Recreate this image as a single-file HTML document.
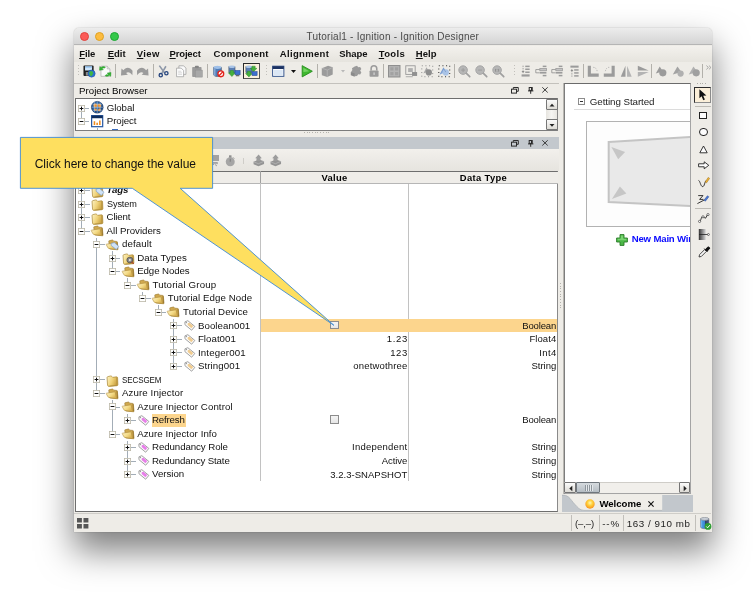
<!DOCTYPE html>
<html><head><meta charset="utf-8"><title>Ignition Designer</title>
<style>
html,body{margin:0;padding:0;background:#fff;}
body{width:753px;height:603px;position:relative;overflow:hidden;font-family:"Liberation Sans",sans-serif;font-size:10px;color:#000;}
div,span,svg{position:absolute;box-sizing:border-box;}
svg{overflow:visible;}
#win{will-change:transform;left:74px;top:27px;width:638px;height:505px;}
#wbg{left:0;top:0.6px;width:638px;height:504.6px;background:#eeece7;border-radius:5px 5px 0 0;box-shadow:0 18px 34px 1px rgba(0,0,0,0.5),0 0 1.5px rgba(0,0,0,0.3);}
#title{left:0;top:0.6px;width:638px;height:17.9px;border-radius:5px 5px 0 0;background:linear-gradient(#ececec,#d4d4d4);border-bottom:0.5px solid #b5b5b5;}
#title .t{left:232.6px;top:3.8px;color:#4b4b4b;white-space:nowrap;}
.tl{top:4.6px;width:9.3px;height:9.3px;border-radius:50%;}
#menu{left:0;top:18.5px;width:638px;height:16.5px;background:linear-gradient(#f3f1ed,#e6e4de);}
#menu span{top:2.5px;font-weight:bold;color:#111;white-space:nowrap;}
#menu u{text-decoration-thickness:0.7px;text-underline-offset:1px;}
.sep{width:1px;background:#b3b1ab;height:14px;}
.grip{width:1px;height:12px;background:repeating-linear-gradient(#c2c0bb 0 1px,transparent 1px 3px);}
.ph{background:#eeece7;height:15px;font-size:9.6px;white-space:nowrap;}
.lbl{white-space:nowrap;font-size:9.7px;line-height:13.5px;height:13.5px;color:#111;letter-spacing:0.25px;}
.val{white-space:nowrap;font-size:9.4px;line-height:13.5px;height:13.5px;text-align:right;color:#111;letter-spacing:0.3px;}
.hl{background:#fcd58d;}
.exp{width:6.6px;height:6.6px;border:0.8px solid #8a8a8a;background:#fff;}
.exp i{position:absolute;left:1px;right:1px;top:2.1px;height:0.9px;background:#222;}
.exp b{position:absolute;top:1px;bottom:1px;left:2.1px;width:0.9px;background:#222;}
.hline{height:0.9px;background:#a3adb7;}
.vline{width:0.9px;background:#a3adb7;}
</style></head><body>
<div id="win"><div id="wbg"></div>
<div id="title">
<div class="tl" style="left:5.9px;background:#fc5b57;border:0.5px solid #e0443e;"></div>
<div class="tl" style="left:20.8px;background:#fdbc40;border:0.5px solid #dea123;"></div>
<div class="tl" style="left:36.0px;background:#34c84a;border:0.5px solid #1ea733;"></div>
<div class="t" style="font-size:10px;letter-spacing:0.221px;">Tutorial1 - Ignition - Ignition Designer</div></div>
<div id="menu">
<span style="left:5.2px;font-size:9.5px;letter-spacing:-0.088px;"><u>F</u>ile</span>
<span style="left:33.7px;font-size:9.5px;letter-spacing:0.019px;"><u>E</u>dit</span>
<span style="left:62.8px;font-size:9.5px;letter-spacing:0.341px;"><u>V</u>iew</span>
<span style="left:95.5px;font-size:9.5px;letter-spacing:-0.151px;"><u>P</u>roject</span>
<span style="left:139.6px;font-size:9.5px;letter-spacing:0.266px;">Component</span>
<span style="left:205.8px;font-size:9.5px;letter-spacing:0.320px;">Alignment</span>
<span style="left:265.3px;font-size:9.5px;letter-spacing:-0.052px;">Shape</span>
<span style="left:304.7px;font-size:9.5px;letter-spacing:0.343px;"><u>T</u>ools</span>
<span style="left:341.8px;font-size:9.5px;letter-spacing:0.071px;"><u>H</u>elp</span>
</div>
<!-- toolbar -->
<div class="grip" style="left:3.50px;top:37.50px;"></div>
<svg style="left:8.50px;top:37.50px;" width="12.5" height="12.5" viewBox="0 0 16 16"><rect x="0.600" y="0.600" width="13" height="13.400" rx="1.200" fill="#1f1f1f"/><rect x="2.600" y="1.800" width="9" height="5.200" fill="#cfe6fb"/><rect x="2.600" y="1.800" width="9" height="1.600" fill="#8fc0ee"/><rect x="3.600" y="9" width="5" height="4.600" fill="#8a8a8a"/><circle cx="11" cy="11" r="4.600" fill="#2a72d0" stroke="#1a4a94" stroke-width="0.600"/><path d="M8 9.500q1.500-2.500 3.500-1.500t1.500 2.500-1.500 3-2.500-.5-1-3.500z" fill="#3fb544"/></svg>
<svg style="left:24.70px;top:37.50px;" width="12.5" height="12.5" viewBox="0 0 16 16"><path d="M2.500 1.500h8l3.500 3.500v9.500H2.500z" fill="#fbfbfb" stroke="#a9a9a9" stroke-width="0.900"/><path d="M10.500 1.500V5H14" fill="#e3e3e3" stroke="#a9a9a9" stroke-width="0.700"/><path d="M0.600 6.800L1 1.800l1.600 1.400C4.400 1.600 6.600 1.500 8.200 2.800L6.800 4.200C6 3.600 5 3.700 4.100 4.600L5.600 6.100z" fill="#35b535" stroke="#1e8a1e" stroke-width="0.500"/><path d="M15.400 9.600L15 14.600l-1.600-1.400c-1.800 1.600-4 1.700-5.600.4l1.400-1.400c.8.600 1.800.5 2.700-.4L10.400 10.300z" fill="#35b535" stroke="#1e8a1e" stroke-width="0.500"/></svg>
<div class="sep" style="left:41.40px;top:36.50px;"></div>
<svg style="left:45.50px;top:37.50px;" width="13.5" height="12.5" viewBox="0 0 16 16"><path d="M0.6 13.4L1.2 4.6L3.8 6.8C6.4 2.4 12 2 15.400 7.400L15.200 13.200C12.600 9.400 9.600 8.600 7.200 10.200L9.400 12.400Z" fill="#9b9b9b"/></svg>
<svg style="left:62.10px;top:37.50px;" width="13.5" height="12.5" viewBox="0 0 16 16"><path d="M0.6 13.4L1.2 4.6L3.8 6.8C6.4 2.4 12 2 15.400 7.400L15.200 13.200C12.600 9.400 9.600 8.600 7.200 10.200L9.400 12.400Z" transform="translate(16,0) scale(-1,1)" fill="#9b9b9b"/></svg>
<div class="sep" style="left:78.90px;top:36.50px;"></div>
<svg style="left:83.00px;top:37.50px;" width="12.5" height="12.5" viewBox="0 0 16 16"><path d="M3 0.8L9.600 10M11.400 1.600L6.200 10.500" stroke="#8d97a8" stroke-width="2" fill="none"/><circle cx="4.800" cy="13" r="2.100" fill="none" stroke="#27467e" stroke-width="1.700"/><circle cx="12" cy="10.600" r="2.100" fill="none" stroke="#27467e" stroke-width="1.700"/></svg>
<svg style="left:100.50px;top:37.50px;" width="12.5" height="12.5" viewBox="0 0 16 16"><path d="M5 1h6l3 3v8H5z" fill="#fafafa" stroke="#9a9a9a" stroke-width="0.9"/><path d="M2 4h6l3 3v8H2z" fill="#fdfdfd" stroke="#9a9a9a" stroke-width="0.9"/><path d="M4 8h4M4 10h5M4 12h5" stroke="#c5c5c5" stroke-width="0.8"/></svg>
<svg style="left:117.00px;top:37.50px;" width="12.5" height="12.5" viewBox="0 0 16 16"><rect x="1.5" y="2.5" width="12" height="13" rx="1" fill="#9b9b9b"/><rect x="5" y="1" width="5" height="3" rx="1" fill="#858585"/><rect x="5.5" y="6.5" width="9" height="9" fill="#a8a8a8" stroke="#8e8e8e" stroke-width="0.6"/></svg>
<div class="sep" style="left:133.40px;top:36.50px;"></div>
<svg style="left:138.20px;top:37.50px;" width="12.5" height="12.5" viewBox="0 0 16 16"><path d="M2 3v9c0 1.6 2.3 2.6 5 2.6s5-1 5-2.6V3z" fill="#4f7db9" stroke="#3c4450" stroke-width="0.7"/><ellipse cx="7" cy="3" rx="5" ry="2" fill="#9fc0e8"/><path d="M2 3v9c0 1 1 2 2.5 2.3V4.6C3 4.3 2 3.7 2 3z" fill="#86a8d6"/><circle cx="11.300" cy="11.300" r="3.700" fill="#fff" stroke="#e3231b" stroke-width="1.700"/><path d="M8.900 13.700l4.800-4.800" stroke="#e3231b" stroke-width="1.600"/></svg>
<svg style="left:153.80px;top:37.50px;" width="12.5" height="12.5" viewBox="0 0 16 16"><path d="M1 2v7c0 1.2 1.8 2 4 2s4-.8 4-2V2z" fill="#5c7fb5" stroke="#3c4450" stroke-width="0.6"/><ellipse cx="5" cy="2.2" rx="4" ry="1.6" fill="#a9c4e6"/><path d="M3 7h4v3h2.5L5 14.8.5 10H3z" fill="#44b03c" stroke="#2b8a26" stroke-width="0.6"/><rect x="9" y="7" width="6.5" height="5.5" fill="#3d6fd0" stroke="#23488f" stroke-width="0.7"/><rect x="10" y="13" width="4.5" height="1.4" fill="#555"/></svg>
<div style="left:169.00px;top:36.00px;width:17px;height:16.4px;background:#fbf1de;border:1px solid #2b2b2b;border-right-color:#555;border-bottom-color:#555;"></div>
<svg style="left:170.50px;top:37.50px;" width="12.5" height="12.5" viewBox="0 0 16 16"><path d="M1 2v7c0 1.2 1.8 2 4 2s4-.8 4-2V2z" fill="#5c7fb5" stroke="#3c4450" stroke-width="0.6"/><ellipse cx="5" cy="2.2" rx="4" ry="1.6" fill="#a9c4e6"/><path d="M9 1.5h4v2.8h2.3L11 8.5 6.7 4.3H9z" fill="#44b03c" stroke="#2b8a26" stroke-width="0.6"/><path d="M3 8h4v3h2.3L5 15.2.7 11H3z" fill="#44b03c" stroke="#2b8a26" stroke-width="0.6"/><rect x="9" y="8.5" width="6.5" height="5" fill="#3d6fd0" stroke="#23488f" stroke-width="0.7"/></svg>
<div class="grip" style="left:192.30px;top:37.50px;"></div>
<svg style="left:197.80px;top:37.50px;" width="12.5" height="12.5" viewBox="0 0 16 16"><rect x="0.8" y="1.5" width="14.4" height="13" fill="#fdfdfd" stroke="#2d4f8a" stroke-width="1.2"/><rect x="0.8" y="1.5" width="14.4" height="3.6" fill="#1b3263"/><rect x="2.3" y="6.3" width="11.4" height="7" fill="#dbe7f5"/></svg>
<svg style="left:217.30px;top:42.70px;" width="5" height="3" viewBox="0 0 5 3"><path d="M0 0h5L2.5 3z" fill="#111"/></svg>
<svg style="left:227.00px;top:37.50px;" width="12.5" height="12.5" viewBox="0 0 16 16"><path d="M1.5 0.8L14.5 8 1.5 15.2z" fill="#3fb82f" stroke="#228a18" stroke-width="1.1" stroke-linejoin="round"/><path d="M3 3.5L10.5 8 3 9z" fill="#8ee07c" opacity="0.7"/></svg>
<div class="sep" style="left:243.40px;top:36.50px;"></div>
<svg style="left:246.80px;top:37.50px;" width="12.5" height="12.5" viewBox="0 0 16 16"><path d="M1 4l8-3 6 2v9l-7 3.5L1 13z" fill="#9b9b9b"/><path d="M1 4l7 2.5V15.5M8 6.5L15 3" stroke="#b9b9b9" stroke-width="0.9" fill="none"/></svg>
<svg style="left:267.30px;top:43.00px;" width="4" height="2.6" viewBox="0 0 5 3"><path d="M0 0h5L2.5 3z" fill="#b8b8b8"/></svg>
<svg style="left:275.90px;top:37.50px;" width="12.5" height="12.5" viewBox="0 0 16 16"><path d="M6 2l3-1 1.5 2 2.5-.5L14.5 5 13 7l1.5 2.5-1.5 2.5-2.5-.3L9 14l-3 .3L4.5 12 2 11.5 1.5 8.5 3 6.5 2.5 4z" fill="#9b9b9b"/><path d="M1 9l5 2v4l-5-2z" fill="#8a8a8a"/></svg>
<svg style="left:294.00px;top:37.50px;" width="12.5" height="12.5" viewBox="0 0 16 16"><path d="M4 7V4.5a3.6 3.6 0 0 1 7.2 0V7" fill="none" stroke="#9b9b9b" stroke-width="2"/><rect x="2" y="7" width="11.5" height="8" rx="1" fill="#9b9b9b"/><rect x="6.8" y="9.5" width="2" height="3.2" fill="#c9c9c9"/></svg>
<div class="sep" style="left:308.70px;top:36.50px;"></div>
<svg style="left:313.50px;top:37.50px;" width="12.5" height="12.5" viewBox="0 0 16 16"><rect x="0.7" y="0.7" width="14.6" height="14.6" fill="#b5b5b5" stroke="#8f8f8f" stroke-width="1.4"/><path d="M3 3h4v4H3zM9 3h4v4H9zM3 9h4v4H3zM9 9h4v4H9z" fill="#a2a2a2"/></svg>
<svg style="left:331.00px;top:37.50px;" width="12.5" height="12.5" viewBox="0 0 16 16"><rect x="1" y="1" width="12" height="11" fill="none" stroke="#959595" stroke-width="1.100"/><rect x="4" y="4" width="6" height="5" fill="#b0b0b0"/><rect x="9" y="9" width="6.5" height="5" fill="#909090"/><path d="M1 15h9" stroke="#9a9a9a" stroke-width="1"/></svg>
<svg style="left:347.00px;top:37.50px;" width="12.5" height="12.5" viewBox="0 0 16 16"><rect x="1" y="1" width="14" height="14" fill="none" stroke="#8a8a8a" stroke-width="1.200" stroke-dasharray="1.300 3.370"/><path d="M3 11L7 3l3 5z" fill="#a9a9a9"/><circle cx="10" cy="9.5" r="4" fill="#8e8e8e"/></svg>
<svg style="left:363.50px;top:37.50px;" width="12.5" height="12.5" viewBox="0 0 16 16"><rect x="1" y="1" width="14" height="14" fill="none" stroke="#333" stroke-width="1.300" stroke-dasharray="1.300 3.370"/><path d="M2 12L7 3l4 6z" fill="#8fb2e2"/><circle cx="10" cy="9.500" r="4" fill="#a9c3e6"/><path d="M3 12L7 4.500l3 4.500" stroke="#6a88b8" stroke-width="0.700" fill="none"/></svg>
<div class="sep" style="left:379.90px;top:36.50px;"></div>
<svg style="left:384.10px;top:37.50px;" width="12.5" height="12.5" viewBox="0 0 16 16"><circle cx="6.5" cy="6.5" r="5.5" fill="#b6b6b6" stroke="#a3a3a3" stroke-width="1.2"/><path d="M10.800 10.800l4.200 4.200" stroke="#a0a0a0" stroke-width="2.200" stroke-linecap="round"/><path d="M4 6.5h5M6.5 4v5" stroke="#9c9c9c" stroke-width="1.2"/></svg>
<svg style="left:400.80px;top:37.50px;" width="12.5" height="12.5" viewBox="0 0 16 16"><circle cx="6.5" cy="6.5" r="5.5" fill="#b6b6b6" stroke="#a3a3a3" stroke-width="1.2"/><path d="M10.800 10.800l4.200 4.200" stroke="#a0a0a0" stroke-width="2.200" stroke-linecap="round"/><path d="M4 6.5h5" stroke="#9c9c9c" stroke-width="1.2"/></svg>
<svg style="left:417.50px;top:37.50px;" width="12.5" height="12.5" viewBox="0 0 16 16"><circle cx="6.5" cy="6.5" r="5.5" fill="#b6b6b6" stroke="#a3a3a3" stroke-width="1.2"/><path d="M10.800 10.800l4.200 4.200" stroke="#a0a0a0" stroke-width="2.200" stroke-linecap="round"/><path d="M4.5 5v3.5M8.5 5v3.5M6.5 5.5v.8M6.5 7.5v.8" stroke="#8a8a8a" stroke-width="1.1"/></svg>
<div class="grip" style="left:439.50px;top:37.50px;"></div>
<svg style="left:444.50px;top:37.50px;" width="12.5" height="12.5" viewBox="0 0 16 16"><rect x="8" y="0.800" width="5.600" height="1.900" fill="#9b9b9b"/><rect x="8" y="4.500" width="5.600" height="1.900" fill="#9b9b9b"/><rect x="8" y="8.300" width="5.600" height="1.900" fill="#9b9b9b"/><rect x="3.300" y="12" width="10.300" height="2.800" fill="#9b9b9b"/><path d="M5.200 0.800V8" stroke="#8c8c8c" stroke-width="1" stroke-dasharray="1.800 1.200"/><path d="M3.300 7.800h3.800L5.200 10.600z" fill="#8c8c8c"/></svg>
<svg style="left:460.50px;top:37.50px;" width="12.5" height="12.5" viewBox="0 0 16 16"><rect x="9.900" y="0.800" width="4.700" height="1.900" fill="#9b9b9b"/><rect x="6.200" y="4.400" width="8.400" height="2.900" fill="#c4c4c4" stroke="#9b9b9b" stroke-width="1"/><rect x="6.200" y="8.800" width="8.400" height="2.200" fill="#9b9b9b"/><rect x="9.900" y="12.600" width="4.700" height="1.900" fill="#9b9b9b"/><path d="M6 5.800H1V10H6" stroke="#8c8c8c" stroke-width="1" fill="none"/></svg>
<svg style="left:477.20px;top:37.50px;" width="12.5" height="12.5" viewBox="0 0 16 16"><rect x="9.900" y="0.800" width="4.700" height="1.900" fill="#9b9b9b"/><rect x="6.200" y="4.400" width="8.400" height="2.900" fill="#c4c4c4" stroke="#9b9b9b" stroke-width="1"/><rect x="6.200" y="8.800" width="8.400" height="2.200" fill="#9b9b9b"/><rect x="9.900" y="12.600" width="4.700" height="1.900" fill="#9b9b9b"/><path d="M6 5.800H1V10H6" stroke="#8c8c8c" stroke-width="1" fill="none"/></svg>
<svg style="left:495.00px;top:37.50px;" width="12.5" height="12.5" viewBox="0 0 16 16"><rect x="1.800" y="0.800" width="10.500" height="2.600" fill="#9b9b9b"/><rect x="6.600" y="5.400" width="5.700" height="1.900" fill="#9b9b9b"/><rect x="6.600" y="9.200" width="5.700" height="1.900" fill="#9b9b9b"/><rect x="6.600" y="13" width="5.700" height="1.900" fill="#9b9b9b"/><path d="M3.700 7.400V15" stroke="#8c8c8c" stroke-width="1" stroke-dasharray="1.800 1.200"/><path d="M1.800 7.800h3.800L3.700 5z" fill="#8c8c8c"/></svg>
<div class="sep" style="left:509.20px;top:36.50px;"></div>
<svg style="left:512.70px;top:37.50px;" width="12.5" height="12.5" viewBox="0 0 16 16"><path d="M1 1h4v10h10v4H1z" fill="#9b9b9b"/><path d="M8 3q4 0 5 5" stroke="#a5a5a5" stroke-width="1" fill="none" stroke-dasharray="1.5 1.5"/></svg>
<svg style="left:529.30px;top:37.50px;" width="12.5" height="12.5" viewBox="0 0 16 16"><path d="M15 1h-4v10H1v4h14z" fill="#9b9b9b"/><path d="M8 3q-4 0-5 5" stroke="#a5a5a5" stroke-width="1" fill="none" stroke-dasharray="1.5 1.5"/></svg>
<svg style="left:546.30px;top:37.50px;" width="12.5" height="12.5" viewBox="0 0 16 16"><path d="M7 1v14H1z" fill="#9b9b9b"/><path d="M9 1v14h6z" fill="#b3b3b3"/></svg>
<svg style="left:563.00px;top:37.50px;" width="12.5" height="12.5" viewBox="0 0 16 16"><path d="M1 1v6h14z" fill="#9b9b9b"/><path d="M1 9v6l14-6z" fill="#b3b3b3"/></svg>
<div class="sep" style="left:577.40px;top:36.50px;"></div>
<svg style="left:581.00px;top:37.50px;" width="12.5" height="12.5" viewBox="0 0 16 16"><path d="M1 11L6 2l4 6z" fill="#9b9b9b"/><circle cx="10" cy="10" r="4.6" fill="#9b9b9b"/></svg>
<svg style="left:597.70px;top:37.50px;" width="12.5" height="12.5" viewBox="0 0 16 16"><path d="M1 12L7 2l5 7z" fill="#a3a3a3"/><circle cx="11" cy="11" r="4" fill="#b0b0b0"/></svg>
<svg style="left:614.30px;top:37.50px;" width="12.5" height="12.5" viewBox="0 0 16 16"><path d="M1 12L7 2l5 7z" fill="#b0b0b0"/><circle cx="10.5" cy="10" r="4.6" fill="#a0a0a0"/></svg>
<div class="sep" style="left:628.20px;top:36.50px;"></div>
<svg style="left:631.50px;top:37.60px;" width="5.5" height="5" viewBox="0 0 6 5"><path d="M0.4 0.4L2.6 2.5 0.4 4.6M3.2 0.4L5.4 2.5 3.2 4.6" stroke="#8d8d8d" stroke-width="0.8" fill="none"/></svg>
<!-- project browser -->
<div style="left:0.00px;top:56.00px;width:485px;height:1px;background:#c3c1bc;"></div>
<svg width="0" height="0" style="left:0;top:0"><defs><linearGradient id="fg" x1="0" x2="1" y1="0" y2="0.4"><stop offset="0" stop-color="#fdf4c8"/><stop offset="0.55" stop-color="#f0d37a"/><stop offset="1" stop-color="#caa243"/></linearGradient><linearGradient id="fg2" x1="0" x2="1" y1="0" y2="0.6"><stop offset="0" stop-color="#fff6cf"/><stop offset="0.6" stop-color="#f3d983"/><stop offset="1" stop-color="#d7b052"/></linearGradient></defs></svg>
<div class="ph" style="left:0.00px;top:57.00px;width:485px;height:13.5px;"><span style="left:5.1px;top:0.7px;font-size:9.7px;letter-spacing:0.003px;">Project Browser</span></div>
<svg style="left:437.00px;top:60.10px;" width="7.8" height="6.6" viewBox="0 0 7.8 6.6"><path d="M2.3 1.9V0.5H7.3V4.3H5.6" fill="none" stroke="#2a2a2a" stroke-width="1"/><rect x="0.5" y="2.2" width="5" height="3.9" fill="none" stroke="#2a2a2a" stroke-width="1"/></svg>
<svg style="left:454.20px;top:60.10px;" width="5.4" height="6.8" viewBox="0 0 5.4 6.8"><rect x="1.2" y="0.5" width="3" height="2.9" fill="none" stroke="#2a2a2a" stroke-width="1"/><path d="M3.6 0.5v3" stroke="#2a2a2a" stroke-width="1.2"/><path d="M0 3.9h5.4M2.7 3.9V6.8" stroke="#2a2a2a" stroke-width="1"/></svg>
<svg style="left:468.20px;top:60.20px;" width="6" height="5.8" viewBox="0 0 6 5.8"><path d="M0.3 0.3l5.4 5.2M5.7 0.3L0.3 5.5" stroke="#2a2a2a" stroke-width="0.9"/></svg>
<div style="left:0.50px;top:70.70px;width:483.8px;height:33.2px;background:#fff;border:1px solid #6e6e6e;border-right-color:#8a8a8a;border-bottom-color:#7c7c7c;"></div>
<div style="left:472.30px;top:71.70px;width:11.2px;height:31.2px;background:linear-gradient(90deg,#e6e4df,#f6f5f2 50%,#e9e7e2);"></div>
<div style="left:472.30px;top:72.30px;width:11.3px;height:10.6px;background:linear-gradient(#fafafa,#dedcd6);border:0.8px solid #777;border-radius:1px;"><svg style="left:1.2px;top:2px" width="8" height="6" viewBox="0 0 8 6"><path d="M1.5 4.5h5L4 1.8z" fill="#222"/></svg></div>
<div style="left:472.30px;top:92.30px;width:11.3px;height:10.6px;background:linear-gradient(#fafafa,#dedcd6);border:0.8px solid #777;border-radius:1px;"><svg style="left:1.2px;top:2px" width="8" height="6" viewBox="0 0 8 6"><path d="M1.5 2h5L4 4.7z" fill="#222"/></svg></div>
<svg style="left:4.00px;top:77.50px;" width="7" height="7" viewBox="0 0 7 7"><rect x="0.4" y="0.4" width="6.2" height="6.2" fill="#fff" stroke="#bcb8a8" stroke-width="0.8"/><path d="M1.6 3.5h3.8M3.5 1.6v3.8" stroke="#111" stroke-width="1"/></svg>
<svg style="left:4.00px;top:91.10px;" width="7" height="7" viewBox="0 0 7 7"><rect x="0.4" y="0.4" width="6.2" height="6.2" fill="#fff" stroke="#bcb8a8" stroke-width="0.8"/><path d="M1.6 3.5h3.8" stroke="#111" stroke-width="1"/></svg>
<div class="hline" style="left:11.30px;top:80.50px;width:4px;"></div><div class="hline" style="left:11.30px;top:94.10px;width:4px;"></div>
<div class="vline" style="left:7.30px;top:84.50px;height:6.5px;"></div>
<div class="vline" style="left:22.50px;top:101.00px;height:2px;"></div>
<div style="left:37.50px;top:101.60px;width:6px;height:1.6px;background:#3d6fc0;"></div>
<svg style="left:17.00px;top:74.20px;" width="12.5" height="12.5" viewBox="0 0 16 16"><defs><radialGradient id="gl" cx="0.4" cy="0.35" r="0.7"><stop offset="0" stop-color="#3f86d0"/><stop offset="1" stop-color="#0f3a74"/></radialGradient></defs><circle cx="8" cy="8" r="7.5" fill="url(#gl)" stroke="#0e2f60" stroke-width="0.8"/><path d="M3 5.2q2-2.600 4-1.600t1 3-3 1.800-2-3.200zM9.500 3.500q2.500-.5 3.500 1.500t-1 3-3-1 .5-3.500zM3.500 10q2-1 3.500 0t0 2.500-3.500-2.500zM9.500 10q2.500-1 3 .5t-2 2.500-1-3z" fill="#f3942a" opacity="0.95"/><path d="M8 .6v14.800M.6 8h14.800M2 4.200h12M2 11.800h12M4.300 1.500v13M11.700 1.500v13" stroke="#dfe9f5" stroke-width="0.7" opacity="0.75" fill="none"/></svg>
<svg style="left:17.00px;top:87.80px;" width="12.3" height="12.3" viewBox="0 0 16 16"><rect x="0.8" y="0.8" width="14.4" height="14.4" fill="#fff" stroke="#2a5aa4" stroke-width="1.6"/><rect x="0.8" y="0.8" width="14.4" height="3.4" fill="#0d2c5c"/><path d="M4.5 13V8M8 13v-3M11.5 13V7" stroke="#f08a1c" stroke-width="2"/></svg>
<span class="lbl" style="left:32.80px;top:73.60px;font-size:9.7px;letter-spacing:-0.088px;">Global</span><span class="lbl" style="left:32.80px;top:87.20px;font-size:9.7px;letter-spacing:-0.065px;">Project</span>
<div style="left:229.50px;top:105.00px;width:26px;height:1px;background:repeating-linear-gradient(90deg,#b5b3ae 0 1px,transparent 1px 2.7px);"></div>
<!-- tag browser -->
<div style="left:0.00px;top:109.60px;width:484.6px;height:12.6px;background:#c3c8cd;"></div>
<svg style="left:437.00px;top:113.10px;" width="7.8" height="6.6" viewBox="0 0 7.8 6.6"><path d="M2.3 1.9V0.5H7.3V4.3H5.6" fill="none" stroke="#2a2a2a" stroke-width="1"/><rect x="0.5" y="2.2" width="5" height="3.9" fill="none" stroke="#2a2a2a" stroke-width="1"/></svg>
<svg style="left:454.20px;top:113.10px;" width="5.4" height="6.8" viewBox="0 0 5.4 6.8"><rect x="1.2" y="0.5" width="3" height="2.9" fill="none" stroke="#2a2a2a" stroke-width="1"/><path d="M3.6 0.5v3" stroke="#2a2a2a" stroke-width="1.2"/><path d="M0 3.9h5.4M2.7 3.9V6.8" stroke="#2a2a2a" stroke-width="1"/></svg>
<svg style="left:468.20px;top:113.20px;" width="6" height="5.8" viewBox="0 0 6 5.8"><path d="M0.3 0.3l5.4 5.2M5.7 0.3L0.3 5.5" stroke="#2a2a2a" stroke-width="0.9"/></svg>
<div style="left:0.00px;top:122.30px;width:485px;height:21.6px;background:linear-gradient(#f2f0ec,#e6e4df);"></div>
<svg style="left:136.00px;top:127.50px;" width="9" height="11" viewBox="0 0 9 11"><rect x="1.5" y="0" width="7.5" height="6" fill="#a2a2a2"/><path d="M2.5 7.5h5v1.2h-5zM1 9.5h3M5 9.5l2 1.5" stroke="#a2a2a2" stroke-width="1" fill="none"/></svg>
<svg style="left:150.80px;top:128.20px;" width="10.5" height="11.5" viewBox="0 0 11 12"><circle cx="5.5" cy="7" r="4.7" fill="#a5a5a5"/><rect x="4.2" y="0.3" width="2.6" height="2.4" fill="#8f8f8f"/><path d="M5.5 7V4M8.6 2.6l1 1" stroke="#7d7d7d" stroke-width="1"/></svg>
<div style="left:169.20px;top:130.50px;width:0.9px;height:6.5px;background:#cfcdc8;"></div>
<svg style="left:179.00px;top:127.40px;" width="11.6" height="12.4" viewBox="0 0 12 13"><path d="M0.5 8.2L6.2 5.8 11.5 7.6V10.4L5.6 12.8 0.5 10.8z" fill="#949494"/><path d="M3.6 7.4V4.4H2.2L5.8 0.6 9.2 4.4H7.8V7.6z" fill="#9c9c9c"/><path d="M0.5 8.2L5.600 10.200 11.500 7.600" stroke="#bdbdbd" stroke-width="0.7" fill="none"/></svg>
<svg style="left:195.60px;top:127.40px;" width="11.6" height="12.4" viewBox="0 0 12 13"><path d="M0.5 8.2L6.2 5.8 11.5 7.6V10.4L5.6 12.8 0.5 10.8z" fill="#949494"/><path d="M3.6 7.4V4.4H2.2L5.8 0.6 9.2 4.4H7.8V7.6z" fill="#9c9c9c"/><path d="M0.5 8.2L5.600 10.200 11.500 7.600" stroke="#bdbdbd" stroke-width="0.7" fill="none"/></svg>
<div style="left:0.50px;top:143.70px;width:483.4px;height:341.4px;background:#fff;border:1px solid #6e6e6e;border-right-color:#8a8a8a;border-bottom-color:#6e6e6e;"></div>
<div style="left:1.50px;top:144.70px;width:482px;height:12.1px;background:#efede9;border-bottom:1px solid #b6b6b6;"></div>
<div style="left:186.20px;top:144.30px;width:1px;height:309.5px;background:#c2c2c2;"></div>
<div style="left:334.40px;top:156.80px;width:1px;height:297px;background:#c2c2c2;"></div>
<div style="left:186.20px;top:144.30px;width:1px;height:12px;background:#a0a0a0;"></div>
<span style="left:187.00px;top:144.90px;width:147px;text-align:center;font-weight:bold;font-size:9.4px;letter-spacing:0.35px;">Value</span>
<span style="left:335.50px;top:144.90px;width:148px;text-align:center;font-weight:bold;font-size:9.4px;letter-spacing:0.35px;">Data Type</span>
<div class="vline" style="left:7.05px;top:166.60px;height:37.3px;"></div>
<div class="vline" style="left:22.35px;top:210.86px;height:155.2px;"></div>
<div class="vline" style="left:37.65px;top:224.38px;height:20.0px;"></div>
<div class="vline" style="left:52.95px;top:251.42px;height:6.5px;"></div>
<div class="vline" style="left:68.25px;top:264.94px;height:6.5px;"></div>
<div class="vline" style="left:83.55px;top:278.46px;height:6.5px;"></div>
<div class="vline" style="left:98.85px;top:291.98px;height:47.1px;"></div>
<div class="vline" style="left:37.65px;top:373.10px;height:33.6px;"></div>
<div class="vline" style="left:52.95px;top:386.62px;height:6.5px;"></div>
<div class="vline" style="left:52.95px;top:413.66px;height:33.6px;"></div>
<div class="hline" style="left:10.80px;top:163.20px;width:5px;"></div>
<svg style="left:4.00px;top:160.15px;" width="7" height="7" viewBox="0 0 7 7"><rect x="0.4" y="0.4" width="6.2" height="6.2" fill="#fff" stroke="#bcb8a8" stroke-width="0.8"/><path d="M1.6 3.5h3.8M3.5 1.6v3.8" stroke="#111" stroke-width="1"/></svg>
<svg style="left:16.90px;top:158.75px;" width="12.4" height="11.7" viewBox="0 0 12 12" preserveAspectRatio="none"><path d="M1 2.6Q1 1.9 1.7 1.7L4.4 1Q5.2 0.9 5.7 1.5L6.5 2.4L10.2 1.9Q11.1 1.9 11.2 2.8L11.5 9.9Q11.5 10.8 10.6 11L3 11.7Q1.6 11.7 1.5 10.5Z" fill="url(#fg)" stroke="#a88534" stroke-width="0.7"/><path d="M10.3 2.3L10.6 10.6L3.2 11.3" fill="none" stroke="#b18d3c" stroke-width="0.9" opacity="0.75"/><path d="M5 3.2l3-1 4.6 4.2-2.6 3.4-5-4.4z" fill="#cfe2f6" stroke="#7f9fc8" stroke-width="0.7"/></svg>
<span class="lbl" style="left:32.60px;top:156.30px;font-weight:bold;font-style:italic;font-size:9.7px;letter-spacing:-0.127px;">Tags</span>
<div class="hline" style="left:10.80px;top:176.72px;width:5px;"></div>
<svg style="left:4.00px;top:173.67px;" width="7" height="7" viewBox="0 0 7 7"><rect x="0.4" y="0.4" width="6.2" height="6.2" fill="#fff" stroke="#bcb8a8" stroke-width="0.8"/><path d="M1.6 3.5h3.8M3.5 1.6v3.8" stroke="#111" stroke-width="1"/></svg>
<svg style="left:16.90px;top:172.27px;" width="12.4" height="11.7" viewBox="0 0 12 12" preserveAspectRatio="none"><path d="M1 2.6Q1 1.9 1.7 1.7L4.4 1Q5.2 0.9 5.7 1.5L6.5 2.4L10.2 1.9Q11.1 1.9 11.2 2.8L11.5 9.9Q11.5 10.8 10.6 11L3 11.7Q1.6 11.7 1.5 10.5Z" fill="url(#fg)" stroke="#a88534" stroke-width="0.7"/><path d="M10.3 2.3L10.6 10.6L3.2 11.3" fill="none" stroke="#b18d3c" stroke-width="0.9" opacity="0.75"/></svg>
<span class="lbl" style="left:32.60px;top:169.82px;font-size:9.7px;letter-spacing:-0.12px;transform-origin:0 0;transform:scaleX(0.9420);">System</span>
<div class="hline" style="left:10.80px;top:190.24px;width:5px;"></div>
<svg style="left:4.00px;top:187.19px;" width="7" height="7" viewBox="0 0 7 7"><rect x="0.4" y="0.4" width="6.2" height="6.2" fill="#fff" stroke="#bcb8a8" stroke-width="0.8"/><path d="M1.6 3.5h3.8M3.5 1.6v3.8" stroke="#111" stroke-width="1"/></svg>
<svg style="left:16.90px;top:185.79px;" width="12.4" height="11.7" viewBox="0 0 12 12" preserveAspectRatio="none"><path d="M1 2.6Q1 1.9 1.7 1.7L4.4 1Q5.2 0.9 5.7 1.5L6.5 2.4L10.2 1.9Q11.1 1.9 11.2 2.8L11.5 9.9Q11.5 10.8 10.6 11L3 11.7Q1.6 11.7 1.5 10.5Z" fill="url(#fg)" stroke="#a88534" stroke-width="0.7"/><path d="M10.3 2.3L10.6 10.6L3.2 11.3" fill="none" stroke="#b18d3c" stroke-width="0.9" opacity="0.75"/></svg>
<span class="lbl" style="left:32.60px;top:183.34px;font-size:9.7px;letter-spacing:-0.200px;">Client</span>
<div class="hline" style="left:10.80px;top:203.76px;width:5px;"></div>
<svg style="left:4.00px;top:200.71px;" width="7" height="7" viewBox="0 0 7 7"><rect x="0.4" y="0.4" width="6.2" height="6.2" fill="#fff" stroke="#bcb8a8" stroke-width="0.8"/><path d="M1.6 3.5h3.8" stroke="#111" stroke-width="1"/></svg>
<svg style="left:16.90px;top:199.31px;" width="12.4" height="11.7" viewBox="0 0 12 12" preserveAspectRatio="none"><path d="M2.7 1.2Q2.6 0.8 3.2 0.7L6 0.1Q6.6 0 7 0.5L7.6 1.2L10.4 1.5Q11 1.6 11 2.2L11.6 9.4Q11.6 10 11 10L3.6 9.2Z" fill="#cfa84e" stroke="#a07e34" stroke-width="0.7" stroke-linejoin="round"/><path d="M0.3 4.9Q-0.2 4.5 0.5 4.3L8 3Q8.7 2.9 8.9 3.6L10.2 9.2Q10.3 9.9 9.6 9.8L2.6 8.6Q2.1 8.5 1.9 8Z" fill="url(#fg2)" stroke="#b3903f" stroke-width="0.6" stroke-linejoin="round"/><path d="M10.6 2.2L11.2 9.6" stroke="#94722a" stroke-width="0.8"/></svg>
<span class="lbl" style="left:32.60px;top:196.86px;font-size:9.7px;letter-spacing:-0.004px;">All Providers</span>
<div class="hline" style="left:26.10px;top:217.28px;width:5px;"></div>
<svg style="left:19.30px;top:214.23px;" width="7" height="7" viewBox="0 0 7 7"><rect x="0.4" y="0.4" width="6.2" height="6.2" fill="#fff" stroke="#bcb8a8" stroke-width="0.8"/><path d="M1.6 3.5h3.8" stroke="#111" stroke-width="1"/></svg>
<svg style="left:32.20px;top:212.83px;" width="12.4" height="11.7" viewBox="0 0 12 12" preserveAspectRatio="none"><path d="M2.7 1.2Q2.6 0.8 3.2 0.7L6 0.1Q6.6 0 7 0.5L7.6 1.2L10.4 1.5Q11 1.6 11 2.2L11.6 9.4Q11.6 10 11 10L3.6 9.2Z" fill="#cfa84e" stroke="#a07e34" stroke-width="0.7" stroke-linejoin="round"/><path d="M0.3 4.9Q-0.2 4.5 0.5 4.3L8 3Q8.7 2.9 8.9 3.6L10.2 9.2Q10.3 9.9 9.6 9.8L2.6 8.6Q2.1 8.5 1.9 8Z" fill="url(#fg2)" stroke="#b3903f" stroke-width="0.6" stroke-linejoin="round"/><path d="M10.6 2.2L11.2 9.6" stroke="#94722a" stroke-width="0.8"/><path d="M5 3.6l3-1 4.4 4-2.4 3.2-5-4.2z" fill="#cfe2f6" stroke="#7f9fc8" stroke-width="0.7"/></svg>
<span class="lbl" style="left:47.90px;top:210.38px;font-size:9.7px;letter-spacing:0.129px;">default</span>
<div class="hline" style="left:41.40px;top:230.80px;width:5px;"></div>
<svg style="left:34.60px;top:227.75px;" width="7" height="7" viewBox="0 0 7 7"><rect x="0.4" y="0.4" width="6.2" height="6.2" fill="#fff" stroke="#bcb8a8" stroke-width="0.8"/><path d="M1.6 3.5h3.8M3.5 1.6v3.8" stroke="#111" stroke-width="1"/></svg>
<svg style="left:47.50px;top:226.35px;" width="12.4" height="11.7" viewBox="0 0 12 12" preserveAspectRatio="none"><path d="M1 2.6Q1 1.9 1.7 1.7L4.4 1Q5.2 0.9 5.7 1.5L6.5 2.4L10.2 1.9Q11.1 1.9 11.2 2.8L11.5 9.9Q11.5 10.8 10.6 11L3 11.7Q1.6 11.7 1.5 10.5Z" fill="url(#fg)" stroke="#a88534" stroke-width="0.7"/><path d="M10.3 2.3L10.6 10.6L3.2 11.3" fill="none" stroke="#b18d3c" stroke-width="0.9" opacity="0.75"/><circle cx="7.6" cy="7.2" r="2.9" fill="#8a8a8a" stroke="#444" stroke-width="0.7"/><circle cx="7.6" cy="7.2" r="1" fill="#e8e8e8"/><path d="M9.2 9l2.2 2.2" stroke="#b04a2a" stroke-width="1.2"/></svg>
<span class="lbl" style="left:63.20px;top:223.90px;font-size:9.7px;letter-spacing:0.090px;">Data Types</span>
<div class="hline" style="left:41.40px;top:244.32px;width:5px;"></div>
<svg style="left:34.60px;top:241.27px;" width="7" height="7" viewBox="0 0 7 7"><rect x="0.4" y="0.4" width="6.2" height="6.2" fill="#fff" stroke="#bcb8a8" stroke-width="0.8"/><path d="M1.6 3.5h3.8" stroke="#111" stroke-width="1"/></svg>
<svg style="left:47.50px;top:239.87px;" width="12.4" height="11.7" viewBox="0 0 12 12" preserveAspectRatio="none"><path d="M2.7 1.2Q2.6 0.8 3.2 0.7L6 0.1Q6.6 0 7 0.5L7.6 1.2L10.4 1.5Q11 1.6 11 2.2L11.6 9.4Q11.6 10 11 10L3.6 9.2Z" fill="#cfa84e" stroke="#a07e34" stroke-width="0.7" stroke-linejoin="round"/><path d="M0.3 4.9Q-0.2 4.5 0.5 4.3L8 3Q8.7 2.9 8.9 3.6L10.2 9.2Q10.3 9.9 9.6 9.8L2.6 8.6Q2.1 8.5 1.9 8Z" fill="url(#fg2)" stroke="#b3903f" stroke-width="0.6" stroke-linejoin="round"/><path d="M10.6 2.2L11.2 9.6" stroke="#94722a" stroke-width="0.8"/></svg>
<span class="lbl" style="left:63.20px;top:237.42px;font-size:9.7px;letter-spacing:-0.099px;">Edge Nodes</span>
<div class="hline" style="left:56.70px;top:257.84px;width:5px;"></div>
<svg style="left:49.90px;top:254.79px;" width="7" height="7" viewBox="0 0 7 7"><rect x="0.4" y="0.4" width="6.2" height="6.2" fill="#fff" stroke="#bcb8a8" stroke-width="0.8"/><path d="M1.6 3.5h3.8" stroke="#111" stroke-width="1"/></svg>
<svg style="left:62.80px;top:253.39px;" width="12.4" height="11.7" viewBox="0 0 12 12" preserveAspectRatio="none"><path d="M2.7 1.2Q2.6 0.8 3.2 0.7L6 0.1Q6.6 0 7 0.5L7.6 1.2L10.4 1.5Q11 1.6 11 2.2L11.6 9.4Q11.6 10 11 10L3.6 9.2Z" fill="#cfa84e" stroke="#a07e34" stroke-width="0.7" stroke-linejoin="round"/><path d="M0.3 4.9Q-0.2 4.5 0.5 4.3L8 3Q8.7 2.9 8.9 3.6L10.2 9.2Q10.3 9.9 9.6 9.8L2.6 8.6Q2.1 8.5 1.9 8Z" fill="url(#fg2)" stroke="#b3903f" stroke-width="0.6" stroke-linejoin="round"/><path d="M10.6 2.2L11.2 9.6" stroke="#94722a" stroke-width="0.8"/></svg>
<span class="lbl" style="left:78.50px;top:250.94px;font-size:9.7px;letter-spacing:0.159px;">Tutorial Group</span>
<div class="hline" style="left:72.00px;top:271.36px;width:5px;"></div>
<svg style="left:65.20px;top:268.31px;" width="7" height="7" viewBox="0 0 7 7"><rect x="0.4" y="0.4" width="6.2" height="6.2" fill="#fff" stroke="#bcb8a8" stroke-width="0.8"/><path d="M1.6 3.5h3.8" stroke="#111" stroke-width="1"/></svg>
<svg style="left:78.10px;top:266.91px;" width="12.4" height="11.7" viewBox="0 0 12 12" preserveAspectRatio="none"><path d="M2.7 1.2Q2.6 0.8 3.2 0.7L6 0.1Q6.6 0 7 0.5L7.6 1.2L10.4 1.5Q11 1.6 11 2.2L11.6 9.4Q11.6 10 11 10L3.6 9.2Z" fill="#cfa84e" stroke="#a07e34" stroke-width="0.7" stroke-linejoin="round"/><path d="M0.3 4.9Q-0.2 4.5 0.5 4.3L8 3Q8.7 2.9 8.9 3.6L10.2 9.2Q10.3 9.9 9.6 9.8L2.6 8.6Q2.1 8.5 1.9 8Z" fill="url(#fg2)" stroke="#b3903f" stroke-width="0.6" stroke-linejoin="round"/><path d="M10.6 2.2L11.2 9.6" stroke="#94722a" stroke-width="0.8"/></svg>
<span class="lbl" style="left:93.80px;top:264.46px;font-size:9.7px;letter-spacing:0.070px;">Tutorial Edge Node</span>
<div class="hline" style="left:87.30px;top:284.88px;width:5px;"></div>
<svg style="left:80.50px;top:281.83px;" width="7" height="7" viewBox="0 0 7 7"><rect x="0.4" y="0.4" width="6.2" height="6.2" fill="#fff" stroke="#bcb8a8" stroke-width="0.8"/><path d="M1.6 3.5h3.8" stroke="#111" stroke-width="1"/></svg>
<svg style="left:93.40px;top:280.43px;" width="12.4" height="11.7" viewBox="0 0 12 12" preserveAspectRatio="none"><path d="M2.7 1.2Q2.6 0.8 3.2 0.7L6 0.1Q6.6 0 7 0.5L7.6 1.2L10.4 1.5Q11 1.6 11 2.2L11.6 9.4Q11.6 10 11 10L3.6 9.2Z" fill="#cfa84e" stroke="#a07e34" stroke-width="0.7" stroke-linejoin="round"/><path d="M0.3 4.9Q-0.2 4.5 0.5 4.3L8 3Q8.7 2.9 8.9 3.6L10.2 9.2Q10.3 9.9 9.6 9.8L2.6 8.6Q2.1 8.5 1.9 8Z" fill="url(#fg2)" stroke="#b3903f" stroke-width="0.6" stroke-linejoin="round"/><path d="M10.6 2.2L11.2 9.6" stroke="#94722a" stroke-width="0.8"/></svg>
<span class="lbl" style="left:109.10px;top:277.98px;font-size:9.7px;letter-spacing:0.041px;">Tutorial Device</span>
<div class="hl" style="left:187.20px;top:292.20px;width:296.3px;height:12.8px;"></div>
<div class="hline" style="left:102.60px;top:298.40px;width:5px;"></div>
<svg style="left:95.80px;top:295.35px;" width="7" height="7" viewBox="0 0 7 7"><rect x="0.4" y="0.4" width="6.2" height="6.2" fill="#fff" stroke="#bcb8a8" stroke-width="0.8"/><path d="M1.6 3.5h3.8M3.5 1.6v3.8" stroke="#111" stroke-width="1"/></svg>
<svg style="left:109.90px;top:293.05px;" width="12.4" height="11.7" viewBox="0 0 12 12" preserveAspectRatio="none"><path d="M0.9 1.9L3.7 0.7L10.5 6.6L7.4 10.5L0.9 4.8Z" fill="#fbfbfb" stroke="#8c8c8c" stroke-width="0.8" stroke-linejoin="round"/><circle cx="2.3" cy="2.5" r="0.75" fill="#9c9c9c"/><path d="M3.6 3.3L5.3 2.7L9 6.2L7.2 8.5L3.5 5.1Z" fill="#f0cc90"/></svg>
<span class="lbl" style="left:123.90px;top:291.50px;font-size:9.7px;letter-spacing:0.069px;">Boolean001</span>
<div style="left:256.30px;top:293.80px;width:8.6px;height:8.6px;background:linear-gradient(#f4f4f4,#e6e6e6);border:1px solid #8c8c8c;"></div>
<span class="val" style="left:448.20px;top:291.80px;text-align:left;font-size:9.5px;letter-spacing:-0.144px;">Boolean</span>
<div class="hline" style="left:102.60px;top:311.92px;width:5px;"></div>
<svg style="left:95.80px;top:308.87px;" width="7" height="7" viewBox="0 0 7 7"><rect x="0.4" y="0.4" width="6.2" height="6.2" fill="#fff" stroke="#bcb8a8" stroke-width="0.8"/><path d="M1.6 3.5h3.8M3.5 1.6v3.8" stroke="#111" stroke-width="1"/></svg>
<svg style="left:109.90px;top:306.57px;" width="12.4" height="11.7" viewBox="0 0 12 12" preserveAspectRatio="none"><path d="M0.9 1.9L3.7 0.7L10.5 6.6L7.4 10.5L0.9 4.8Z" fill="#fbfbfb" stroke="#8c8c8c" stroke-width="0.8" stroke-linejoin="round"/><circle cx="2.3" cy="2.5" r="0.75" fill="#9c9c9c"/><path d="M3.6 3.3L5.3 2.7L9 6.2L7.2 8.5L3.5 5.1Z" fill="#f0cc90"/></svg>
<span class="lbl" style="left:123.90px;top:305.02px;font-size:9.7px;letter-spacing:0.036px;">Float001</span>
<span class="val" style="left:312.80px;top:305.32px;text-align:left;font-size:9.5px;letter-spacing:0.637px;">1.23</span>
<span class="val" style="left:455.40px;top:305.32px;text-align:left;font-size:9.5px;letter-spacing:0.079px;">Float4</span>
<div class="hline" style="left:102.60px;top:325.44px;width:5px;"></div>
<svg style="left:95.80px;top:322.39px;" width="7" height="7" viewBox="0 0 7 7"><rect x="0.4" y="0.4" width="6.2" height="6.2" fill="#fff" stroke="#bcb8a8" stroke-width="0.8"/><path d="M1.6 3.5h3.8M3.5 1.6v3.8" stroke="#111" stroke-width="1"/></svg>
<svg style="left:109.90px;top:320.09px;" width="12.4" height="11.7" viewBox="0 0 12 12" preserveAspectRatio="none"><path d="M0.9 1.9L3.7 0.7L10.5 6.6L7.4 10.5L0.9 4.8Z" fill="#fbfbfb" stroke="#8c8c8c" stroke-width="0.8" stroke-linejoin="round"/><circle cx="2.3" cy="2.5" r="0.75" fill="#9c9c9c"/><path d="M3.6 3.3L5.3 2.7L9 6.2L7.2 8.5L3.5 5.1Z" fill="#f0cc90"/></svg>
<span class="lbl" style="left:123.90px;top:318.54px;font-size:9.7px;letter-spacing:0.169px;">Integer001</span>
<span class="val" style="left:316.20px;top:318.84px;text-align:left;font-size:9.5px;letter-spacing:0.575px;">123</span>
<span class="val" style="left:465.20px;top:318.84px;text-align:left;font-size:9.5px;letter-spacing:0.385px;">Int4</span>
<div class="hline" style="left:102.60px;top:338.96px;width:5px;"></div>
<svg style="left:95.80px;top:335.91px;" width="7" height="7" viewBox="0 0 7 7"><rect x="0.4" y="0.4" width="6.2" height="6.2" fill="#fff" stroke="#bcb8a8" stroke-width="0.8"/><path d="M1.6 3.5h3.8M3.5 1.6v3.8" stroke="#111" stroke-width="1"/></svg>
<svg style="left:109.90px;top:333.61px;" width="12.4" height="11.7" viewBox="0 0 12 12" preserveAspectRatio="none"><path d="M0.9 1.9L3.7 0.7L10.5 6.6L7.4 10.5L0.9 4.8Z" fill="#fbfbfb" stroke="#8c8c8c" stroke-width="0.8" stroke-linejoin="round"/><circle cx="2.3" cy="2.5" r="0.75" fill="#9c9c9c"/><path d="M3.6 3.3L5.3 2.7L9 6.2L7.2 8.5L3.5 5.1Z" fill="#f0cc90"/></svg>
<span class="lbl" style="left:123.90px;top:332.06px;font-size:9.7px;letter-spacing:0.085px;">String001</span>
<span class="val" style="left:279.30px;top:332.36px;text-align:left;font-size:9.5px;letter-spacing:0.161px;">onetwothree</span>
<span class="val" style="left:457.50px;top:332.36px;text-align:left;font-size:9.5px;letter-spacing:-0.023px;">String</span>
<div class="hline" style="left:26.10px;top:352.48px;width:5px;"></div>
<svg style="left:19.30px;top:349.43px;" width="7" height="7" viewBox="0 0 7 7"><rect x="0.4" y="0.4" width="6.2" height="6.2" fill="#fff" stroke="#bcb8a8" stroke-width="0.8"/><path d="M1.6 3.5h3.8M3.5 1.6v3.8" stroke="#111" stroke-width="1"/></svg>
<svg style="left:32.20px;top:348.03px;" width="12.4" height="11.7" viewBox="0 0 12 12" preserveAspectRatio="none"><path d="M1 2.6Q1 1.9 1.7 1.7L4.4 1Q5.2 0.9 5.7 1.5L6.5 2.4L10.2 1.9Q11.1 1.9 11.2 2.8L11.5 9.9Q11.5 10.8 10.6 11L3 11.7Q1.6 11.7 1.5 10.5Z" fill="url(#fg)" stroke="#a88534" stroke-width="0.7"/><path d="M10.3 2.3L10.6 10.6L3.2 11.3" fill="none" stroke="#b18d3c" stroke-width="0.9" opacity="0.75"/></svg>
<span class="lbl" style="left:47.90px;top:345.58px;font-size:9.7px;letter-spacing:-0.12px;transform-origin:0 0;transform:scaleX(0.8265);">SECSGEM</span>
<div class="hline" style="left:26.10px;top:366.00px;width:5px;"></div>
<svg style="left:19.30px;top:362.95px;" width="7" height="7" viewBox="0 0 7 7"><rect x="0.4" y="0.4" width="6.2" height="6.2" fill="#fff" stroke="#bcb8a8" stroke-width="0.8"/><path d="M1.6 3.5h3.8" stroke="#111" stroke-width="1"/></svg>
<svg style="left:32.20px;top:361.55px;" width="12.4" height="11.7" viewBox="0 0 12 12" preserveAspectRatio="none"><path d="M2.7 1.2Q2.6 0.8 3.2 0.7L6 0.1Q6.6 0 7 0.5L7.6 1.2L10.4 1.5Q11 1.6 11 2.2L11.6 9.4Q11.6 10 11 10L3.6 9.2Z" fill="#cfa84e" stroke="#a07e34" stroke-width="0.7" stroke-linejoin="round"/><path d="M0.3 4.9Q-0.2 4.5 0.5 4.3L8 3Q8.7 2.9 8.9 3.6L10.2 9.2Q10.3 9.9 9.6 9.8L2.6 8.6Q2.1 8.5 1.9 8Z" fill="url(#fg2)" stroke="#b3903f" stroke-width="0.6" stroke-linejoin="round"/><path d="M10.6 2.2L11.2 9.6" stroke="#94722a" stroke-width="0.8"/></svg>
<span class="lbl" style="left:47.90px;top:359.10px;font-size:9.7px;letter-spacing:0.120px;">Azure Injector</span>
<div class="hline" style="left:41.40px;top:379.52px;width:5px;"></div>
<svg style="left:34.60px;top:376.47px;" width="7" height="7" viewBox="0 0 7 7"><rect x="0.4" y="0.4" width="6.2" height="6.2" fill="#fff" stroke="#bcb8a8" stroke-width="0.8"/><path d="M1.6 3.5h3.8" stroke="#111" stroke-width="1"/></svg>
<svg style="left:47.50px;top:375.07px;" width="12.4" height="11.7" viewBox="0 0 12 12" preserveAspectRatio="none"><path d="M2.7 1.2Q2.6 0.8 3.2 0.7L6 0.1Q6.6 0 7 0.5L7.6 1.2L10.4 1.5Q11 1.6 11 2.2L11.6 9.4Q11.6 10 11 10L3.6 9.2Z" fill="#cfa84e" stroke="#a07e34" stroke-width="0.7" stroke-linejoin="round"/><path d="M0.3 4.9Q-0.2 4.5 0.5 4.3L8 3Q8.7 2.9 8.9 3.6L10.2 9.2Q10.3 9.9 9.6 9.8L2.6 8.6Q2.1 8.5 1.9 8Z" fill="url(#fg2)" stroke="#b3903f" stroke-width="0.6" stroke-linejoin="round"/><path d="M10.6 2.2L11.2 9.6" stroke="#94722a" stroke-width="0.8"/></svg>
<span class="lbl" style="left:63.20px;top:372.62px;font-size:9.7px;letter-spacing:0.081px;">Azure Injector Control</span>
<div class="hline" style="left:56.70px;top:393.04px;width:5px;"></div>
<svg style="left:49.90px;top:389.99px;" width="7" height="7" viewBox="0 0 7 7"><rect x="0.4" y="0.4" width="6.2" height="6.2" fill="#fff" stroke="#bcb8a8" stroke-width="0.8"/><path d="M1.6 3.5h3.8M3.5 1.6v3.8" stroke="#111" stroke-width="1"/></svg>
<svg style="left:64.00px;top:387.69px;" width="12.4" height="11.7" viewBox="0 0 12 12" preserveAspectRatio="none"><path d="M0.9 1.9L3.7 0.7L10.5 6.6L7.4 10.5L0.9 4.8Z" fill="#fbfbfb" stroke="#8c8c8c" stroke-width="0.8" stroke-linejoin="round"/><circle cx="2.3" cy="2.5" r="0.75" fill="#9c9c9c"/><path d="M3.6 3.3L5.3 2.7L9 6.2L7.2 8.5L3.5 5.1Z" fill="#e77fe9"/></svg>
<div class="hl" style="left:77.50px;top:386.84px;width:34.0px;height:13px;"></div>
<span class="lbl" style="left:78.00px;top:386.14px;font-size:9.7px;letter-spacing:-0.177px;">Refresh</span>
<div style="left:256.30px;top:388.44px;width:8.6px;height:8.6px;background:linear-gradient(#f4f4f4,#e6e6e6);border:1px solid #8c8c8c;"></div>
<span class="val" style="left:448.20px;top:386.44px;text-align:left;font-size:9.5px;letter-spacing:-0.144px;">Boolean</span>
<div class="hline" style="left:41.40px;top:406.56px;width:5px;"></div>
<svg style="left:34.60px;top:403.51px;" width="7" height="7" viewBox="0 0 7 7"><rect x="0.4" y="0.4" width="6.2" height="6.2" fill="#fff" stroke="#bcb8a8" stroke-width="0.8"/><path d="M1.6 3.5h3.8" stroke="#111" stroke-width="1"/></svg>
<svg style="left:47.50px;top:402.11px;" width="12.4" height="11.7" viewBox="0 0 12 12" preserveAspectRatio="none"><path d="M2.7 1.2Q2.6 0.8 3.2 0.7L6 0.1Q6.6 0 7 0.5L7.6 1.2L10.4 1.5Q11 1.6 11 2.2L11.6 9.4Q11.6 10 11 10L3.6 9.2Z" fill="#cfa84e" stroke="#a07e34" stroke-width="0.7" stroke-linejoin="round"/><path d="M0.3 4.9Q-0.2 4.5 0.5 4.3L8 3Q8.7 2.9 8.9 3.6L10.2 9.2Q10.3 9.9 9.6 9.8L2.6 8.6Q2.1 8.5 1.9 8Z" fill="url(#fg2)" stroke="#b3903f" stroke-width="0.6" stroke-linejoin="round"/><path d="M10.6 2.2L11.2 9.6" stroke="#94722a" stroke-width="0.8"/></svg>
<span class="lbl" style="left:63.20px;top:399.66px;font-size:9.7px;letter-spacing:0.066px;">Azure Injector Info</span>
<div class="hline" style="left:56.70px;top:420.08px;width:5px;"></div>
<svg style="left:49.90px;top:417.03px;" width="7" height="7" viewBox="0 0 7 7"><rect x="0.4" y="0.4" width="6.2" height="6.2" fill="#fff" stroke="#bcb8a8" stroke-width="0.8"/><path d="M1.6 3.5h3.8M3.5 1.6v3.8" stroke="#111" stroke-width="1"/></svg>
<svg style="left:64.00px;top:414.73px;" width="12.4" height="11.7" viewBox="0 0 12 12" preserveAspectRatio="none"><path d="M0.9 1.9L3.7 0.7L10.5 6.6L7.4 10.5L0.9 4.8Z" fill="#fbfbfb" stroke="#8c8c8c" stroke-width="0.8" stroke-linejoin="round"/><circle cx="2.3" cy="2.5" r="0.75" fill="#9c9c9c"/><path d="M3.6 3.3L5.3 2.7L9 6.2L7.2 8.5L3.5 5.1Z" fill="#e77fe9"/></svg>
<span class="lbl" style="left:78.00px;top:413.18px;font-size:9.7px;letter-spacing:-0.079px;">Redundancy Role</span>
<span class="val" style="left:278.00px;top:413.48px;text-align:left;font-size:9.5px;letter-spacing:0.237px;">Independent</span>
<span class="val" style="left:457.50px;top:413.48px;text-align:left;font-size:9.5px;letter-spacing:-0.023px;">String</span>
<div class="hline" style="left:56.70px;top:433.60px;width:5px;"></div>
<svg style="left:49.90px;top:430.55px;" width="7" height="7" viewBox="0 0 7 7"><rect x="0.4" y="0.4" width="6.2" height="6.2" fill="#fff" stroke="#bcb8a8" stroke-width="0.8"/><path d="M1.6 3.5h3.8M3.5 1.6v3.8" stroke="#111" stroke-width="1"/></svg>
<svg style="left:64.00px;top:428.25px;" width="12.4" height="11.7" viewBox="0 0 12 12" preserveAspectRatio="none"><path d="M0.9 1.9L3.7 0.7L10.5 6.6L7.4 10.5L0.9 4.8Z" fill="#fbfbfb" stroke="#8c8c8c" stroke-width="0.8" stroke-linejoin="round"/><circle cx="2.3" cy="2.5" r="0.75" fill="#9c9c9c"/><path d="M3.6 3.3L5.3 2.7L9 6.2L7.2 8.5L3.5 5.1Z" fill="#e77fe9"/></svg>
<span class="lbl" style="left:78.00px;top:426.70px;font-size:9.7px;letter-spacing:-0.127px;">Redundancy State</span>
<span class="val" style="left:307.70px;top:427.00px;text-align:left;font-size:9.5px;letter-spacing:-0.074px;">Active</span>
<span class="val" style="left:457.50px;top:427.00px;text-align:left;font-size:9.5px;letter-spacing:-0.023px;">String</span>
<div class="hline" style="left:56.70px;top:447.12px;width:5px;"></div>
<svg style="left:49.90px;top:444.07px;" width="7" height="7" viewBox="0 0 7 7"><rect x="0.4" y="0.4" width="6.2" height="6.2" fill="#fff" stroke="#bcb8a8" stroke-width="0.8"/><path d="M1.6 3.5h3.8M3.5 1.6v3.8" stroke="#111" stroke-width="1"/></svg>
<svg style="left:64.00px;top:441.77px;" width="12.4" height="11.7" viewBox="0 0 12 12" preserveAspectRatio="none"><path d="M0.9 1.9L3.7 0.7L10.5 6.6L7.4 10.5L0.9 4.8Z" fill="#fbfbfb" stroke="#8c8c8c" stroke-width="0.8" stroke-linejoin="round"/><circle cx="2.3" cy="2.5" r="0.75" fill="#9c9c9c"/><path d="M3.6 3.3L5.3 2.7L9 6.2L7.2 8.5L3.5 5.1Z" fill="#e77fe9"/></svg>
<span class="lbl" style="left:78.00px;top:440.22px;font-size:9.7px;letter-spacing:-0.009px;">Version</span>
<span class="val" style="left:256.30px;top:440.52px;text-align:left;font-size:9.5px;letter-spacing:0.027px;">3.2.3-SNAPSHOT</span>
<span class="val" style="left:457.50px;top:440.52px;text-align:left;font-size:9.5px;letter-spacing:-0.023px;">String</span>
<div style="left:486.30px;top:256.00px;width:1px;height:26px;background:repeating-linear-gradient(#b3b1ac 0 1px,transparent 1px 2.7px);"></div>
<!-- workspace -->
<div style="left:489.00px;top:56.00px;width:1px;height:411px;background:#b9b7b2;"></div>
<div style="left:490.00px;top:56.00px;width:127.4px;height:411px;background:#fff;border:1px solid #7d7d7d;border-top-color:#6b6b6b;border-right-color:#a4a4a4;border-bottom-color:#a4a4a4;overflow:hidden;" id="ws">
<div style="left:13.00px;top:14.20px;width:7px;height:7px;border:0.8px solid #8c8c8c;background:#fff;"><i style="position:absolute;left:1.2px;right:1.2px;top:2.3px;height:0.9px;background:#333;"></i></div>
<span style="left:24.80px;top:12.00px;font-size:9.8px;letter-spacing:-0.080px;white-space:nowrap;color:#222;">Getting Started</span>
<div style="left:8.50px;top:24.70px;width:130px;height:1px;background:#dcdcdc;"></div>
<div style="left:21.30px;top:37.20px;width:130px;height:105.8px;background:#fdfdfd;border:1px solid #b2b2b2;"></div>
<svg style="left:21.30px;top:37.20px;" width="130" height="106" viewBox="586.3 121.2 130 106"><path d="M609 142.200L700 136.600V206.600L609 202.200z" fill="#e9e9e9" stroke="#c4c4c4" stroke-width="2"/><path d="M611.7 147.2L625.4 152.2 618.5 159.4z" fill="#c6c6c6"/><path d="M620.2 186.8L626.7 193.7 612.2 199.2z" fill="#c6c6c6"/></svg>
<svg style="left:51.30px;top:149.50px;" width="12" height="12" viewBox="0 0 12 12"><path d="M4 0.6h4v3.4h3.4v4H8v3.4H4V8H0.6V4H4z" fill="#4cb848" stroke="#2a7a28" stroke-width="0.9" stroke-linejoin="round"/><path d="M4.8 1.6h2.4v3.2H4.8zM1.6 4.8h8.8v1.4H1.6z" fill="#8fe084" opacity="0.7"/></svg>
<span style="left:66.70px;top:149.40px;font-size:9.6px;font-weight:bold;letter-spacing:-0.171px;color:#0b0bff;white-space:nowrap;">New Main Window</span>
</div>
<div style="left:490.20px;top:454.60px;width:126.3px;height:11.6px;background:#f1efeb;border-top:0.6px solid #cfcdc8;"></div>
<div style="left:490.40px;top:454.80px;width:11.4px;height:11.2px;background:linear-gradient(#fbfbfb,#dddbd5);border:0.8px solid #757575;border-radius:1px;"><svg style="left:2.2px;top:1.8px" width="6" height="7" viewBox="0 0 6 7"><path d="M4.3 0.8v5.4L1.3 3.5z" fill="#222"/></svg></div>
<div style="left:604.80px;top:454.80px;width:11.4px;height:11.2px;background:linear-gradient(#fbfbfb,#dddbd5);border:0.8px solid #757575;border-radius:1px;"><svg style="left:2.2px;top:1.8px" width="6" height="7" viewBox="0 0 6 7"><path d="M1.7 0.8v5.4l3-2.7z" fill="#222"/></svg></div>
<div style="left:502.20px;top:454.80px;width:24px;height:11.2px;background:linear-gradient(#d5dade,#b4bcc3);border:0.8px solid #6f767d;border-radius:1px;"><div style="left:7.5px;top:2.4px;width:8px;height:5.6px;background:repeating-linear-gradient(90deg,#8d959c 0 0.9px,#e4e8eb 0.9px 2px);"></div></div>
<div style="left:487.50px;top:468.00px;width:131.3px;height:17px;background:#c2c7cc;"></div>
<svg style="left:487.50px;top:468.00px;" width="101" height="17" viewBox="0 0 101 17"><path d="M0 0H100.2V15.4H22C17.500 15.400 15.500 12 13 9.500S8.500 3.500 6.500 2 2.500 0 0 0z" fill="#efede8"/><path d="M0 0.200C2.500 0.200 4.500 0.500 6.500 2S10.500 7 13 9.500s4.500 5.900 9 5.900H100.200" fill="none" stroke="#a7adb3" stroke-width="0.7"/></svg>
<svg style="left:511.20px;top:471.60px;" width="10" height="10" viewBox="0 0 10 10"><defs><radialGradient id="sun" cx="0.5" cy="0.38" r="0.6"><stop offset="0" stop-color="#fff6b8"/><stop offset="0.45" stop-color="#ffd23c"/><stop offset="1" stop-color="#f7941d"/></radialGradient></defs><circle cx="5" cy="5" r="4.7" fill="url(#sun)"/></svg>
<span style="left:525.40px;top:471.10px;font-weight:bold;white-space:nowrap;font-size:9.6px;letter-spacing:-0.012px;">Welcome</span>
<svg style="left:574.30px;top:473.60px;" width="6" height="6" viewBox="0 0 6 6"><path d="M0.4 0.4l5.2 5.2M5.6 0.4L0.4 5.6" stroke="#111" stroke-width="1.1"/></svg>
<!-- tool strip -->
<div style="left:622.80px;top:56.30px;width:11px;height:1px;background:repeating-linear-gradient(90deg,#aeaca7 0 1px,transparent 1px 2.7px);"></div>
<div style="left:620.30px;top:59.60px;width:17.2px;height:16.4px;background:#fbefd9;border:1px solid #2c2c2c;border-right-color:#8b8b8b;border-bottom-color:#8b8b8b;"></div>
<svg style="left:625.40px;top:62.00px;" width="8" height="11.5" viewBox="0 0 8 11.5"><path d="M0.4 0.3V9.3L2.6 7.3 4.3 11.2 5.9 10.5 4.2 6.7 7.4 6.6z" fill="#111"/></svg>
<div style="left:621.00px;top:78.70px;width:16px;height:0.9px;background:#bdbbb5;"></div>
<div style="left:625.40px;top:84.60px;width:7.6px;height:7.6px;border:1px solid #222;background:#fdfdfd;"></div>
<div style="left:624.80px;top:100.70px;width:8.8px;height:8.8px;border:1px solid #222;border-radius:50%;background:#fdfdfd;"></div>
<svg style="left:624.80px;top:117.50px;" width="9" height="8.5" viewBox="0 0 9 8.5"><path d="M4.5 1L8.2 7.8H0.8z" fill="#fdfdfd" stroke="#222" stroke-width="0.9"/></svg>
<svg style="left:623.60px;top:133.80px;" width="11.5" height="8.6" viewBox="0 0 11.5 8.6"><path d="M0.6 2.8H6.2V0.8L10.8 4.3 6.2 7.8V5.8H0.6z" fill="#fdfdfd" stroke="#222" stroke-width="0.9" stroke-linejoin="round"/></svg>
<svg style="left:623.50px;top:149.00px;" width="12" height="11.5" viewBox="0 0 12 11.5"><path d="M0.6 4.5C2 4.5 2.6 10.6 4.6 10.6S6.6 6 8 4.6" fill="none" stroke="#222" stroke-width="0.9"/><path d="M7.2 6l3-4.6 1.4 1-3 4.4z" fill="#f0b432" stroke="#9a6a10" stroke-width="0.5"/></svg>
<svg style="left:623.30px;top:165.50px;" width="12.5" height="11.5" viewBox="0 0 12.5 11.5"><path d="M1.2 2.6H6L2.6 6.4H6.4M0.4 10.6L7.2 7" fill="none" stroke="#222" stroke-width="0.9"/><path d="M7 7.2l3.4-4.4 1.4 1L8.4 8.2z" fill="#4a78d8" stroke="#26448a" stroke-width="0.5"/></svg>
<div style="left:621.00px;top:180.90px;width:16px;height:0.9px;background:#bdbbb5;"></div>
<svg style="left:623.60px;top:186.00px;" width="11.5" height="10" viewBox="0 0 11.5 10"><path d="M1.6 8.4C3 8.4 3 3.2 5 3.6S6.4 6.2 7.6 5 8.8 1.8 10 1.6" fill="none" stroke="#222" stroke-width="0.9"/><circle cx="1.6" cy="8.4" r="1.1" fill="#fff" stroke="#222" stroke-width="0.6"/><circle cx="5" cy="3.8" r="1.1" fill="#fff" stroke="#222" stroke-width="0.6"/><circle cx="10" cy="1.6" r="1.1" fill="#fff" stroke="#222" stroke-width="0.6"/></svg>
<svg style="left:623.50px;top:201.80px;" width="12" height="11" viewBox="0 0 12 11"><defs><linearGradient id="gg" x1="0" x2="1"><stop offset="0" stop-color="#333"/><stop offset="1" stop-color="#d8d8d8"/></linearGradient></defs><rect x="0.8" y="0" width="7" height="11" fill="url(#gg)"/><path d="M1 5.5h9.4" stroke="#222" stroke-width="0.8"/><circle cx="10.4" cy="5.5" r="1" fill="#fff" stroke="#222" stroke-width="0.6"/></svg>
<svg style="left:623.50px;top:218.50px;" width="12" height="12" viewBox="0 0 12 12"><path d="M1 11l0.6-2.4L6.6 3.6 8.4 5.4 3.4 10.4z" fill="#f4f4f4" stroke="#222" stroke-width="0.8"/><path d="M6.3 2.6l3.1 3.1M7.4 3.6L9.6 1.2a1.3 1.3 0 0 1 1.8 1.8L8.9 5.2z" fill="#111" stroke="#111" stroke-width="1"/></svg>
<!-- status bar -->
<div style="left:0.00px;top:486.00px;width:637px;height:1px;background:#cfcdc8;"></div>
<svg style="left:2.60px;top:491.40px;" width="11.4" height="10.6" viewBox="0 0 11.4 10.6"><path d="M0 0h4.9v4.5H0zM6.5 0h4.9v4.5H6.5zM0 6.1h4.9v4.5H0zM6.5 6.1h4.9v4.5H6.5z" fill="#555"/></svg>
<div style="left:497.00px;top:488.20px;width:0.9px;height:15.8px;background:#c1bfba;"></div>
<div style="left:524.50px;top:488.20px;width:0.9px;height:15.8px;background:#c1bfba;"></div>
<div style="left:549.40px;top:488.20px;width:0.9px;height:15.8px;background:#c1bfba;"></div>
<div style="left:621.00px;top:488.20px;width:0.9px;height:15.8px;background:#c1bfba;"></div>
<span style="left:500.50px;top:491.10px;font-size:9.6px;letter-spacing:0.4px;white-space:nowrap;color:#222;font-size:9.8px;letter-spacing:-0.12px;transform-origin:0 0;transform:scaleX(0.9761);">(–,–)</span>
<span style="left:528.20px;top:491.10px;font-size:9.6px;letter-spacing:0.4px;white-space:nowrap;color:#222;font-size:9.8px;letter-spacing:0.880px;">--%</span>
<span style="left:552.80px;top:491.10px;font-size:9.6px;letter-spacing:0.4px;white-space:nowrap;color:#222;font-size:9.8px;letter-spacing:0.545px;">163 / 910 mb</span>
<svg style="left:625.60px;top:490.00px;" width="12" height="12.6" viewBox="0 0 12 12.6"><defs><linearGradient id="dbg" x1="0" x2="1"><stop offset="0" stop-color="#9fd0f6"/><stop offset="0.2" stop-color="#4b9be2"/><stop offset="0.5" stop-color="#3b86d2"/><stop offset="0.56" stop-color="#2c3c60"/><stop offset="1" stop-color="#4a5c84"/></linearGradient></defs><path d="M0.500 1.800v8.200c0 1 1.900 1.700 4.200 1.700s4.200-.7 4.200-1.700V1.800z" fill="url(#dbg)" stroke="#59616f" stroke-width="0.500"/><ellipse cx="4.700" cy="1.900" rx="4.200" ry="1.500" fill="#c9cfd7" stroke="#6a7280" stroke-width="0.500"/><circle cx="8" cy="9.400" r="3.400" fill="#2e9e33"/><path d="M6.300 9.500l1.300 1.300 2.200-2.600" stroke="#fff" stroke-width="1" fill="none"/></svg>
</div>
<!-- callout -->
<svg style="left:0;top:0" width="753" height="603" viewBox="0 0 753 603"><path d="M20.4 137.4H212.6V188.3H180.2L333.9 325.3L132.3 188.3H20.4z" fill="#fedf5f" stroke="#3d8ad6" stroke-width="0.9" stroke-linejoin="miter"/></svg>
<span style="left:34.7px;top:156.5px;white-space:nowrap;color:#111;font-size:12px;letter-spacing:-0.005px;">Click here to change the value</span>
</body></html>
